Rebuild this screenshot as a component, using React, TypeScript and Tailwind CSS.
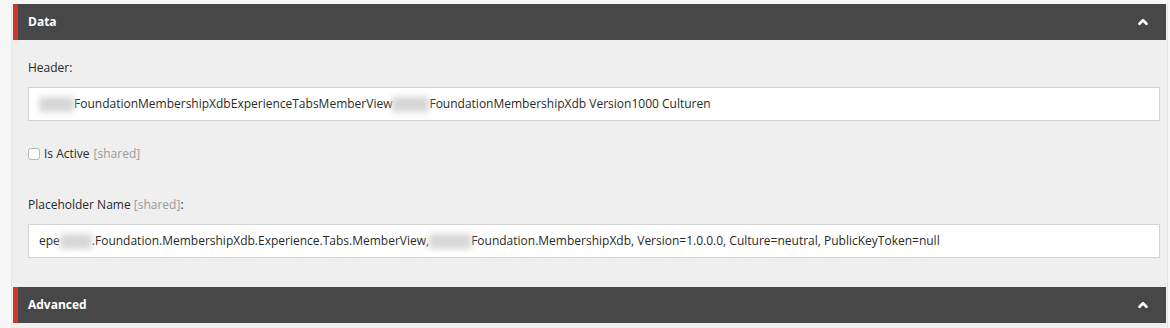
import { ChevronUp } from 'lucide-react';

const font = { fontFamily: '"Open Sans", "Liberation Sans", sans-serif' };

function Blur({ w }: { w: number }) {
    return <span className="inline-block h-[15px] align-middle bg-[#d6d6d6] blur-[3px]" style={{ width: w }} />;
}

function SectionHeader({ title }: { title: string }) {
    return (
        <div className="mx-[1px] flex h-[36px] items-center justify-between border-l-[5px] border-[#c8392e] bg-[#474747] pl-[10px] pr-[16px]">
            <span className="text-[12px] font-bold text-white">{title}</span>
            <ChevronUp className="h-[14px] w-[14px] text-white" strokeWidth={4.5} />
        </div>
    );
}

function Field({ children }: { children: React.ReactNode }) {
    return (
        <div className="mt-[10px] ml-[16px] mr-[7px] flex h-[34px] items-center border border-[#d4d4d4] bg-white px-[10px] text-[12px] whitespace-nowrap text-[#2a2a2a]">
            {children}
        </div>
    );
}

export default function App() {
    return (
        <div className="h-[328px] w-[1170px] bg-[#f7f7f7] pt-[4px] pl-[11px] pr-[2px]" style={font}>
            <div className="h-full border-x border-[#e6e6e6] bg-[#efefef]">
                <SectionHeader title="Data" />

                {/* Header field */}
                <div className="pt-[19px] pl-[16px] text-[12px] text-[#2a2a2a] leading-[18px]">Header:</div>
                <Field>
                    <Blur w={35} />
                    <span>FoundationMembershipXdbExperienceTabsMemberView</span>
                    <Blur w={37} />
                    <span>FoundationMembershipXdb Version1000 Culturen</span>
                </Field>

                {/* Is Active */}
                <div className="mt-[24px] ml-[16px] flex items-center gap-[4px] text-[12px] leading-[18px] text-[#2a2a2a]">
                    <span className="inline-block h-[12px] w-[12px] rounded-[3px] border border-[#b8b8b8] bg-white" />
                    <span>Is Active</span>
                    <span className="text-[#9a9a9a]">[shared]</span>
                </div>

                {/* Placeholder Name */}
                <div className="mt-[33px] ml-[16px] text-[12px] leading-[18px] text-[#2a2a2a]">
                    Placeholder Name <span className="text-[#9a9a9a]">[shared]</span>:
                </div>
                <Field>
                    <span>epe</span>
                    <Blur w={32} />
                    <span>.Foundation.MembershipXdb.Experience.Tabs.MemberView,</span>
                    <Blur w={42} />
                    <span>Foundation.MembershipXdb, Version=1.0.0.0, Culture=neutral, PublicKeyToken=null</span>
                </Field>

                <div className="mt-[29px]">
                    <SectionHeader title="Advanced" />
                </div>
            </div>
        </div>
    );
}
